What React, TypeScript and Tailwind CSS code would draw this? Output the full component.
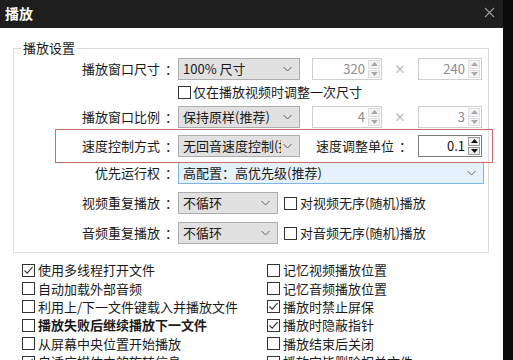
import React from "react";

const FONT = { fontFamily: '"Microsoft YaHei", "Noto Sans CJK SC", "Noto Sans", sans-serif' };

function Chevron() {
  return (
    <svg width="9" height="6" viewBox="0 0 9 6" className="shrink-0">
      <polyline points="0.5,1 4.5,5 8.5,1" fill="none" stroke="#606060" strokeWidth="1" />
    </svg>
  );
}

function Select({ text, w, focus = false }: { text: string; w: string; focus?: boolean }) {
  return (
    <div
      className={`${w} h-[22px] flex items-center justify-between gap-[2px] pl-[4px] pr-[7px] border whitespace-nowrap ${
        focus ? "bg-[#e5f1fb] border-[#7fb4e4]" : "bg-[#e1e1e1] border-[#adadad]"
      }`}
    >
      <span className="min-w-0 overflow-hidden text-[13px] leading-[20px] text-[#1a1a1a]">{text}</span>
      <Chevron />
    </div>
  );
}

function Arrow({ up, color }: { up: boolean; color: string }) {
  return (
    <svg width="7" height="4" viewBox="0 0 7 4">
      <polygon points={up ? "0,4 3.5,0 7,4" : "0,0 3.5,4 7,0"} fill={color} />
    </svg>
  );
}

function Spin({ value, w, enabled = false }: { value: string; w: string; enabled?: boolean }) {
  const c = enabled ? "#111" : "#a8a8a8";
  const btn = enabled ? "border-[#9a9a9a] bg-[#ececec]" : "border-[#dedede] bg-[#f3f3f3]";
  return (
    <div
      className={`${w} h-[22px] flex items-stretch border bg-white ${
        enabled ? "border-[#7a7a7a]" : "border-[#cfcfcf]"
      }`}
    >
      <div
        className={`flex-1 text-right pr-[3px] text-[13px] leading-[20px] ${
          enabled ? "text-[#111]" : "text-[#8c8c8c]"
        }`}
      >
        {value}
      </div>
      <div className="w-[13px] flex flex-col gap-[1px] py-[1px] pr-[1px]">
        <div className={`flex-1 flex items-center justify-center border ${btn}`}>
          <Arrow up color={c} />
        </div>
        <div className={`flex-1 flex items-center justify-center border ${btn}`}>
          <Arrow up={false} color={c} />
        </div>
      </div>
    </div>
  );
}

function Box({ checked = false }: { checked?: boolean }) {
  return (
    <svg width="13" height="13" viewBox="0 0 13 13" className="shrink-0">
      <rect x="0.5" y="0.5" width="12" height="12" fill="#fff" stroke="#333" strokeWidth="1" />
      {checked && <polyline points="2.5,6.5 5.2,9.2 10.5,3.2" fill="none" stroke="#333" strokeWidth="1.1" />}
    </svg>
  );
}

function Check({ label, checked = false, bold = false }: { label: string; checked?: boolean; bold?: boolean }) {
  return (
    <div className="flex items-center gap-[3px] h-[18.4px] whitespace-nowrap">
      <Box checked={checked} />
      <span className={`text-[13px] leading-[16px] text-[#1a1a1a] ${bold ? "font-bold" : ""}`}>{label}</span>
    </div>
  );
}

// the colon is drawn centred in its cell, as in the original font
function Colon() {
  return <span className="inline-block pl-[5px] -mr-[5px]">：</span>;
}

function Label({ text }: { text: string }) {
  return (
    <div className="w-[159px] shrink-0 text-right text-[13px] leading-[16px] text-[#1a1a1a]">
      {text}
      <Colon />
    </div>
  );
}

const leftChecks = [
  { label: "使用多线程打开文件", checked: true },
  { label: "自动加载外部音频" },
  { label: "利用上/下一文件键载入并播放文件" },
  { label: "播放失败后继续播放下一文件", bold: true },
  { label: "从屏幕中央位置开始播放" },
  { label: "自适应媒体中的旋转信息", checked: true },
];

const rightChecks = [
  { label: "记忆视频播放位置" },
  { label: "记忆音频播放位置" },
  { label: "播放时禁止屏保", checked: true },
  { label: "播放时隐蔽指针", checked: true },
  { label: "播放结束后关闭" },
  { label: "播放完毕删除相关文件" },
];

export default function App() {
  return (
    <div className="relative w-[513px] h-[360px] overflow-hidden flex bg-[#0b0b0b]" style={FONT}>
      <div className="w-[503px] flex flex-col bg-white">
        {/* title bar */}
        <div className="h-[28px] shrink-0 bg-[#1e1e1e] flex items-center justify-between pl-[5px] pr-[8px]">
          <span className="text-white font-bold text-[14px] leading-[18px] -mt-[3px]">播放</span>
          <svg width="11" height="11" viewBox="0 0 11 11" className="-mt-[4px]">
            <path d="M1 1 L10 10 M10 1 L1 10" stroke="#9a9a9a" strokeWidth="1.1" />
          </svg>
        </div>

        <div className="pt-[12px] pl-[13px]">
          <fieldset className="w-[476px] border border-[#dcdcdc] pb-[8px]">
            <legend className="ml-[7px] px-[2px] text-[13px] leading-[16px] text-[#1a1a1a]">播放设置</legend>

            <div className="flex flex-col">
              <div className="mt-[2px] flex items-center">
                <Label text="播放窗口尺寸" />
                <div className="ml-[5px]"><Select text="100% 尺寸" w="w-[122px]" /></div>
                <div className="ml-[12px]"><Spin value="320" w="w-[70px]" /></div>
                <div className="w-[36px] text-center text-[12px] text-[#a0a0a0]">×</div>
                <Spin value="240" w="w-[64px]" />
              </div>

              <div className="mt-[4px] h-[16px] flex items-center pl-[164px] gap-[2px]">
                <Box />
                <span className="text-[13px] leading-[16px] text-[#1a1a1a]">仅在播放视频时调整一次尺寸</span>
              </div>

              <div className="mt-[6px] flex items-center">
                <Label text="播放窗口比例" />
                <div className="ml-[5px]"><Select text="保持原样(推荐)" w="w-[122px]" /></div>
                <div className="ml-[12px]"><Spin value="4" w="w-[70px]" /></div>
                <div className="w-[36px] text-center text-[12px] text-[#a0a0a0]">×</div>
                <Spin value="3" w="w-[64px]" />
              </div>

              <div className="mt-[7px] flex items-center">
                <Label text="速度控制方式" />
                <div className="ml-[5px]"><Select text="无回音速度控制(推荐)" w="w-[122px]" /></div>
                <div className="w-[118px] pr-[11px] text-right text-[13px] leading-[16px] text-[#1a1a1a]">
                  速度调整单位
                  <Colon />
                </div>
                <Spin value="0.1" w="w-[64px]" enabled />
              </div>

              <div className="mt-[5px] flex items-center">
                <Label text="优先运行权" />
                <div className="ml-[5px]"><Select text="高配置：高优先级(推荐)" w="w-[306px]" focus /></div>
              </div>

              <div className="mt-[8px] flex items-center">
                <Label text="视频重复播放" />
                <div className="ml-[5px]"><Select text="不循环" w="w-[100px]" /></div>
                <div className="ml-[6px] flex items-center gap-[3px]">
                  <Box />
                  <span className="text-[13px] leading-[16px] text-[#1a1a1a]">对视频无序(随机)播放</span>
                </div>
              </div>

              <div className="mt-[8px] flex items-center">
                <Label text="音频重复播放" />
                <div className="ml-[5px]"><Select text="不循环" w="w-[100px]" /></div>
                <div className="ml-[6px] flex items-center gap-[3px]">
                  <Box />
                  <span className="text-[13px] leading-[16px] text-[#1a1a1a]">对音频无序(随机)播放</span>
                </div>
              </div>
            </div>
          </fieldset>

          <div className="mt-[8px] grid grid-cols-[245px_1fr] pl-[9px]">
            <div className="flex flex-col">
              {leftChecks.map((c) => (
                <Check key={c.label} {...c} />
              ))}
            </div>
            <div className="flex flex-col">
              {rightChecks.map((c) => (
                <Check key={c.label} {...c} />
              ))}
            </div>
          </div>
        </div>
      </div>
      <div className="flex-1 bg-[#0b0b0b]" />

      {/* annotation highlight */}
      <div className="absolute left-[55px] top-[129px] w-[438px] h-[34px] border-[1.5px] border-[#d06a6a] pointer-events-none" />
    </div>
  );
}
